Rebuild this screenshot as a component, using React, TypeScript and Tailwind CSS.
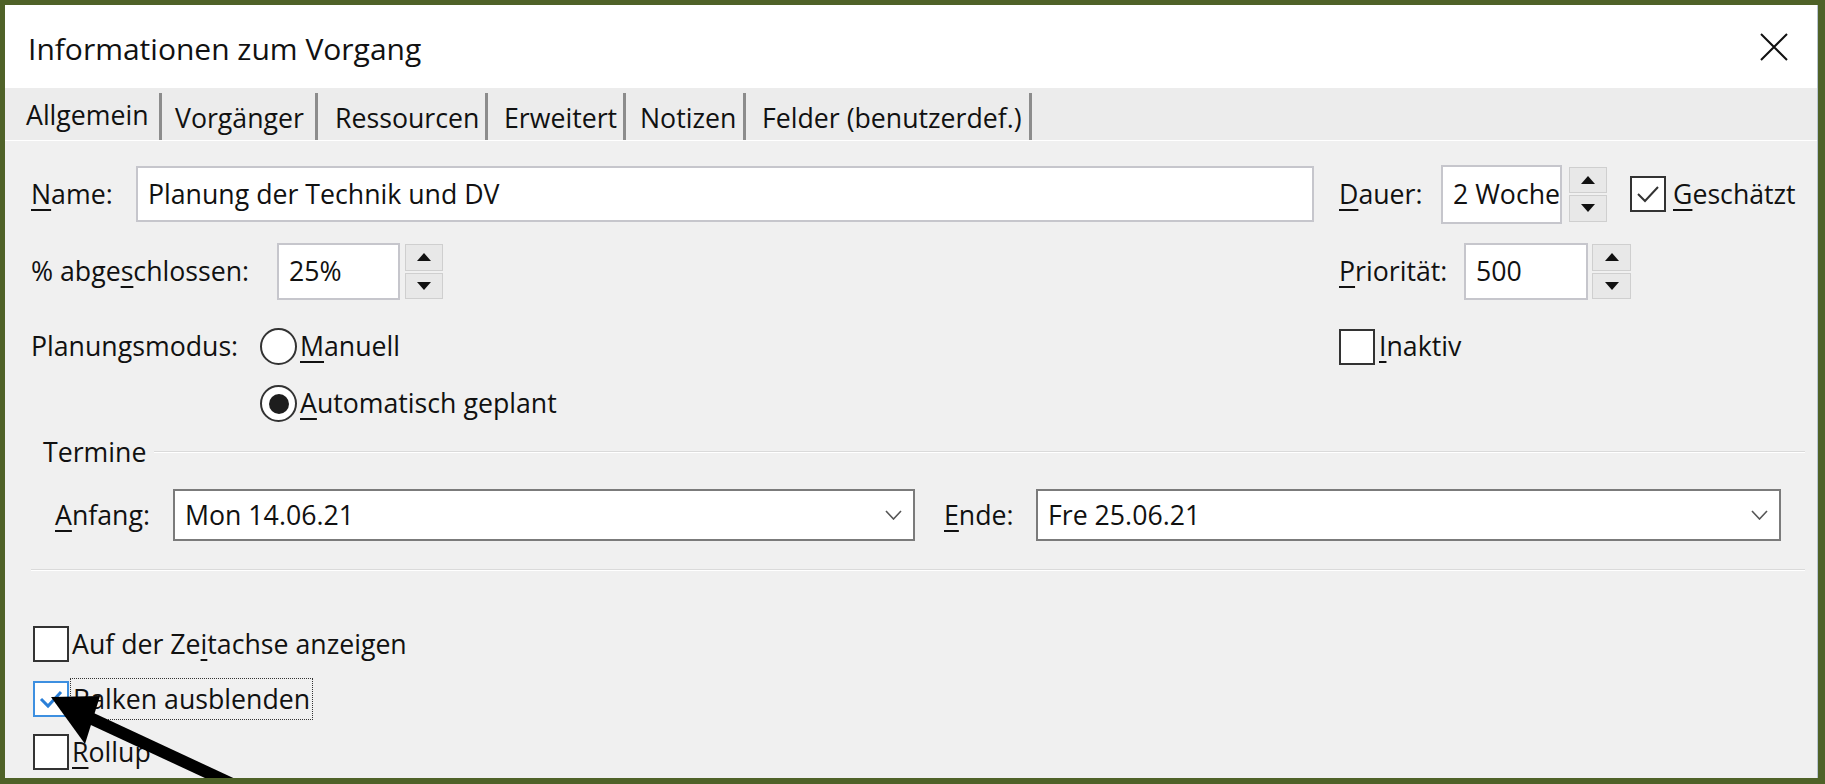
import React from 'react';

const tabs = [
  { label: 'Allgemein', w: 'w-[157px]', pl: 'pl-[21px]', active: true },
  { label: 'Vorgänger', w: 'w-[156px]', pl: 'pl-[13px]' },
  { label: 'Ressourcen', w: 'w-[170px]', pl: 'pl-[17px]' },
  { label: 'Erweitert', w: 'w-[138px]', pl: 'pl-[16px]' },
  { label: 'Notizen', w: 'w-[120px]', pl: 'pl-[14px]' },
  { label: 'Felder (benutzerdef.)', w: 'w-[286px]', pl: 'pl-[16px]' },
];

// label with an underlined access key
function Mn({ text, at }: { text: string; at: number }) {
  return (
    <span className="whitespace-nowrap">
      {text.slice(0, at)}
      <span className="underline decoration-[2px] underline-offset-[5px]">{text[at]}</span>
      {text.slice(at + 1)}
    </span>
  );
}

function Spinner({ w = 'w-[38px]' }: { w?: string }) {
  return (
    <div className={`flex h-[55px] flex-col gap-[2px] ${w}`}>
      <div className="flex flex-1 items-center justify-center border border-[#cfcfcf] bg-[#e8e8e8]">
        <svg width="14" height="8" viewBox="0 0 14 8">
          <path d="M7 0 L14 8 L0 8 Z" fill="#111" />
        </svg>
      </div>
      <div className="flex flex-1 items-center justify-center border border-[#cfcfcf] bg-[#e8e8e8]">
        <svg width="14" height="8" viewBox="0 0 14 8">
          <path d="M0 0 L14 0 L7 8 Z" fill="#111" />
        </svg>
      </div>
    </div>
  );
}

function CheckBox({ checked = false, blue = false }: { checked?: boolean; blue?: boolean }) {
  return (
    <div
      className={`flex h-[36px] w-[36px] shrink-0 items-center justify-center border-2 bg-white ${
        blue ? 'border-[#3d8fe0]' : 'border-[#333]'
      }`}
    >
      {checked && (
        <svg width="26" height="22" viewBox="0 0 26 22">
          <path
            d="M3 11 L10 18 L23 4"
            fill="none"
            stroke={blue ? '#2a7fd8' : '#333'}
            strokeWidth={blue ? 3 : 2}
          />
        </svg>
      )}
    </div>
  );
}

function Radio({ checked = false }: { checked?: boolean }) {
  return (
    <div className="flex h-[37px] w-[37px] shrink-0 items-center justify-center rounded-full border-2 border-[#333] bg-white">
      {checked && <div className="h-[20px] w-[20px] rounded-full bg-[#1d1d1d]" />}
    </div>
  );
}

function TextBox({ w, value, h = 'h-[56px]' }: { w: string; value: string; h?: string }) {
  return (
    <div className={`flex items-center overflow-hidden whitespace-nowrap border-2 border-[#c6c6cc] bg-white pl-[10px] ${w} ${h}`}>
      {value}
    </div>
  );
}

function DropDown({ w, value }: { w: string; value: string }) {
  return (
    <div className={`flex h-[52px] items-center justify-between border-2 border-[#7b7b7b] bg-white pl-[10px] pr-[11px] ${w}`}>
      <span>{value}</span>
      <svg width="17" height="10" viewBox="0 0 17 10">
        <path d="M1 1 L8.5 9 L16 1" fill="none" stroke="#555" strokeWidth="1.6" />
      </svg>
    </div>
  );
}

export default function App() {
  return (
    <div className="relative h-[784px] w-[1825px] overflow-hidden border-b-[6px] border-l-[5px] border-r-[7px] border-t-[5px] border-[#4f6228] font-['Open_Sans',sans-serif] text-[26.7px] leading-none text-[#111]">
      <div className="flex h-full flex-col border-r border-[#b9c4d2] bg-[#f0f0f0]">
        {/* title bar */}
        <div className="flex h-[83px] shrink-0 items-center justify-between bg-white pl-[23px] pr-[29px] pt-[5px]">
          <span className="text-[30px]">Informationen zum Vorgang</span>
          <svg width="28" height="28" viewBox="0 0 28 28" className="-mt-[4px]">
            <path d="M1 1 L27 27 M27 1 L1 27" stroke="#111" strokeWidth="2" />
          </svg>
        </div>

        {/* tabs */}
        <div className="flex h-[53px] shrink-0 items-end border-b border-white bg-[#ececec]">
          {tabs.map((t) => (
            <div
              key={t.label}
              className={`flex h-[47px] items-center border-r-[3px] border-[#8c8c8c] ${t.w} ${t.pl} ${
                t.active ? 'pb-[2px]' : 'pt-[4px]'
              }`}
            >
              <span className="whitespace-nowrap">{t.label}</span>
            </div>
          ))}
        </div>

        {/* content */}
        <div className="flex flex-col pl-[26px] pr-[12px]">
          {/* Name / Dauer */}
          <div className="mt-[25px] flex h-[56px] items-center">
            <div className="flex w-[1283px] items-center">
              <div className="w-[105px]">
                <Mn text="Name:" at={0} />
              </div>
              <TextBox w="w-[1178px]" value="Planung der Technik und DV" />
            </div>
            <div className="ml-[25px] flex items-center">
              <div className="w-[102px]">
                <Mn text="Dauer:" at={0} />
              </div>
              <TextBox w="w-[121px]" h="h-[59px]" value="2 Wochen" />
              <div className="ml-[7px]">
                <Spinner />
              </div>
              <div className="ml-[23px]">
                <CheckBox checked />
              </div>
              <div className="ml-[7px]">
                <Mn text="Geschätzt" at={0} />
              </div>
            </div>
          </div>

          {/* % abgeschlossen / Priorität */}
          <div className="mt-[21px] flex h-[57px] items-center">
            <div className="flex w-[1283px] items-center">
              <div className="w-[246px]">
                <Mn text="% abgeschlossen:" at={6} />
              </div>
              <TextBox w="w-[123px]" h="h-[57px]" value="25%" />
              <div className="ml-[5px]">
                <Spinner />
              </div>
            </div>
            <div className="ml-[25px] flex items-center">
              <div className="w-[125px]">
                <Mn text="Priorität:" at={0} />
              </div>
              <TextBox w="w-[124px]" h="h-[57px]" value="500" />
              <div className="ml-[4px]">
                <Spinner w="w-[39px]" />
              </div>
            </div>
          </div>

          {/* Planungsmodus / Inaktiv */}
          <div className="mt-[28px] flex h-[37px] items-center">
            <div className="flex w-[1283px] items-center">
              <div className="w-[229px]">Planungsmodus:</div>
              <Radio />
              <div className="ml-[3px]">
                <Mn text="Manuell" at={0} />
              </div>
            </div>
            <div className="ml-[25px] flex items-center">
              <CheckBox />
              <div className="ml-[4px]">
                <Mn text="Inaktiv" at={0} />
              </div>
            </div>
          </div>

          <div className="mt-[20px] flex h-[37px] items-center pl-[229px]">
            <Radio checked />
            <div className="ml-[3px]">
              <Mn text="Automatisch geplant" at={0} />
            </div>
          </div>

          {/* Termine */}
          <div className="mt-[12px] flex h-[36px] items-center pl-[12px]">
            <span>Termine</span>
            <div className="ml-[8px] flex-1 border-t border-b border-t-[#dadada] border-b-white" />
          </div>

          <div className="mt-[19px] flex h-[52px] items-center pl-[24px]">
            <div className="w-[118px]">
              <Mn text="Anfang:" at={0} />
            </div>
            <DropDown w="w-[742px]" value="Mon 14.06.21" />
            <div className="ml-[29px] w-[92px]">
              <Mn text="Ende:" at={0} />
            </div>
            <DropDown w="w-[745px]" value="Fre 25.06.21" />
          </div>

          <div className="mt-[28px] border-t border-b border-t-[#dadada] border-b-white" />

          {/* flags */}
          <div className="mt-[55px] flex h-[36px] items-center pl-[2px]">
            <CheckBox />
            <div className="ml-[3px]">
              <Mn text="Auf der Zeitachse anzeigen" at={10} />
            </div>
          </div>
          <div className="mt-[19px] flex h-[36px] items-center pl-[2px]">
            <CheckBox checked blue />
            <div className="ml-[1px] flex h-[42px] items-center border border-dotted border-[#333] px-[2px]">
              <Mn text="Balken ausblenden" at={0} />
            </div>
          </div>
          <div className="mt-[17px] flex h-[36px] items-center pl-[2px]">
            <CheckBox />
            <div className="ml-[3px]">
              <Mn text="Rollup" at={0} />
            </div>
          </div>
        </div>
      </div>

      {/* pointer arrow drawn over the dialog */}
      <svg
        className="pointer-events-none absolute left-[-5px] top-[-5px]"
        width="1825"
        height="784"
        viewBox="0 0 1825 784"
      >
        <path d="M88 717 L232 784" stroke="#000" strokeWidth="12" />
        <path d="M51 697 L100 696 L85 744 Z" fill="#000" />
      </svg>
    </div>
  );
}
